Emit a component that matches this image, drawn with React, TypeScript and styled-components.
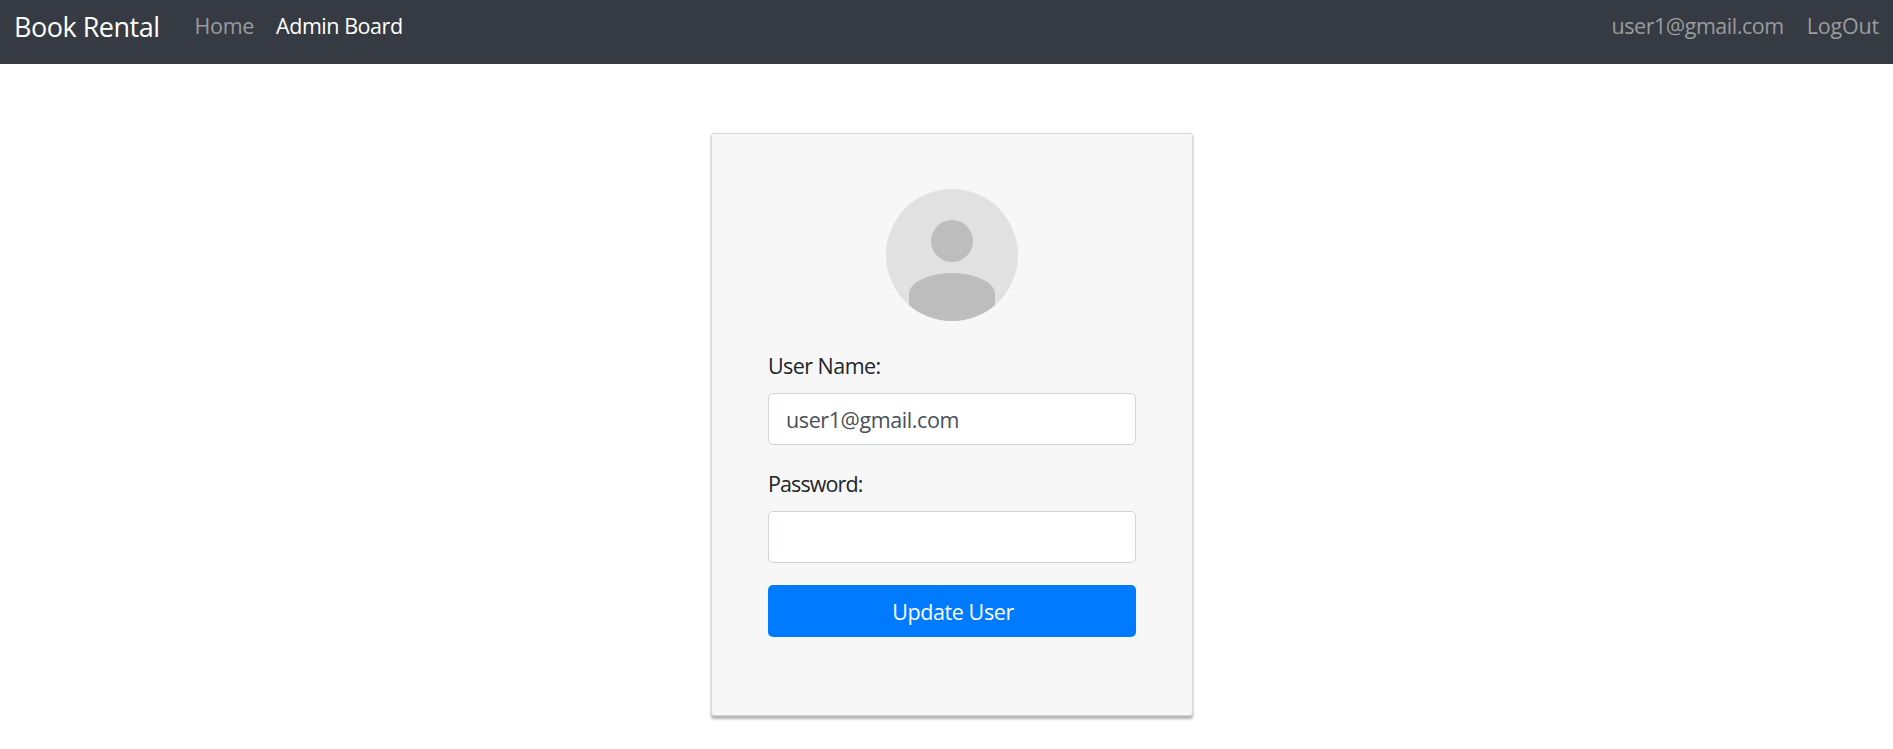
import React from "react";
import styled, { createGlobalStyle } from "styled-components";

const GlobalStyle = createGlobalStyle`
  *, *::before, *::after { box-sizing: border-box; }
  body {
    margin: 0;
    background: #fff;
    color: #212529;
    font-family: "Segoe UI", "Open Sans", "Noto Sans", sans-serif;
    font-size: 21.5px;
    line-height: 33px;
  }
`;

const Page = styled.div`
  display: flex;
  flex-direction: column;
  min-height: 100vh;
`;

const Navbar = styled.nav`
  display: flex;
  align-items: flex-start;
  height: 64px;
  padding: 9px 14px 0 14px;
  background: #363a42;
`;

const Brand = styled.a`
  margin-right: 35px;
  color: #fff;
  font-size: 27px;
  line-height: 35px;
  letter-spacing: -0.5px;
  white-space: nowrap;
  text-decoration: none;
`;

const NavGroup = styled.div<{ $end?: boolean }>`
  display: flex;
  gap: ${(p) => (p.$end ? 23 : 22)}px;
  margin-left: ${(p) => (p.$end ? "auto" : "0")};
`;

const NavLink = styled.a<{ $active?: boolean; $spacing: number }>`
  color: ${(p) => (p.$active ? "#fff" : "#9a9c9f")};
  letter-spacing: ${(p) => p.$spacing}px;
  white-space: nowrap;
  text-decoration: none;
`;

const Main = styled.main`
  display: flex;
  flex: 1;
  align-items: flex-start;
  justify-content: center;
  padding: 69px 0 0 11px;
`;

const Card = styled.section`
  display: flex;
  flex-direction: column;
  width: 482px;
  height: 583px;
  padding: 55px 56px 0;
  background: #f7f7f7;
  border: 1px solid #d5d6d7;
  border-radius: 3px;
  box-shadow: 0 2.75px 2.75px rgba(0, 0, 0, 0.3);
`;

const Avatar = styled.svg`
  display: block;
  width: 132px;
  height: 132px;
  margin: 0 auto 28px;
`;

const Form = styled.form`
  display: flex;
  flex-direction: column;
  margin: 0;
`;

const Field = styled.div`
  display: flex;
  flex-direction: column;
  margin-bottom: 22px;
`;

const Label = styled.label<{ $spacing: number }>`
  margin-bottom: 11px;
  letter-spacing: ${(p) => p.$spacing}px;
`;

const Input = styled.input`
  width: 100%;
  height: 52px;
  padding: 1px 17px 0;
  border: 1px solid #ced4da;
  border-radius: 5px;
  background: #fff;
  color: #495057;
  font: inherit;
  letter-spacing: -0.4px;
`;

const SubmitButton = styled.button`
  height: 52px;
  padding: 1px 0 0 2px;
  border: 0;
  border-radius: 5px;
  background: #007bff;
  color: #fff;
  font: inherit;
  letter-spacing: -0.4px;
`;

export default function App() {
  return (
    <Page>
      <GlobalStyle />
      <Navbar>
        <Brand>Book Rental</Brand>
        <NavGroup>
          <NavLink $spacing={-0.3}>Home</NavLink>
          <NavLink $active $spacing={-0.45}>Admin Board</NavLink>
        </NavGroup>
        <NavGroup $end>
          <NavLink $spacing={-0.45}>user1@gmail.com</NavLink>
          <NavLink $spacing={-0.2}>LogOut</NavLink>
        </NavGroup>
      </Navbar>
      <Main>
        <Card>
          <Avatar viewBox="0 0 132 132" aria-label="User avatar">
            <defs>
              <clipPath id="avatar-circle">
                <circle cx="66" cy="66" r="66" />
              </clipPath>
            </defs>
            <g clipPath="url(#avatar-circle)">
              <rect width="132" height="132" fill="#e1e1e1" />
              <circle cx="66" cy="52" r="21" fill="#bdbdbd" />
              <path
                d="M23 132V105C23 93 44 84 66 84S109 93 109 105V132Z"
                fill="#bdbdbd"
              />
            </g>
          </Avatar>
          <Form>
            <Field>
              <Label htmlFor="username" $spacing={-0.55}>User Name:</Label>
              <Input id="username" type="text" defaultValue="user1@gmail.com" />
            </Field>
            <Field>
              <Label htmlFor="password" $spacing={-0.9}>Password:</Label>
              <Input id="password" type="password" />
            </Field>
            <SubmitButton type="button">Update User</SubmitButton>
          </Form>
        </Card>
      </Main>
    </Page>
  );
}
